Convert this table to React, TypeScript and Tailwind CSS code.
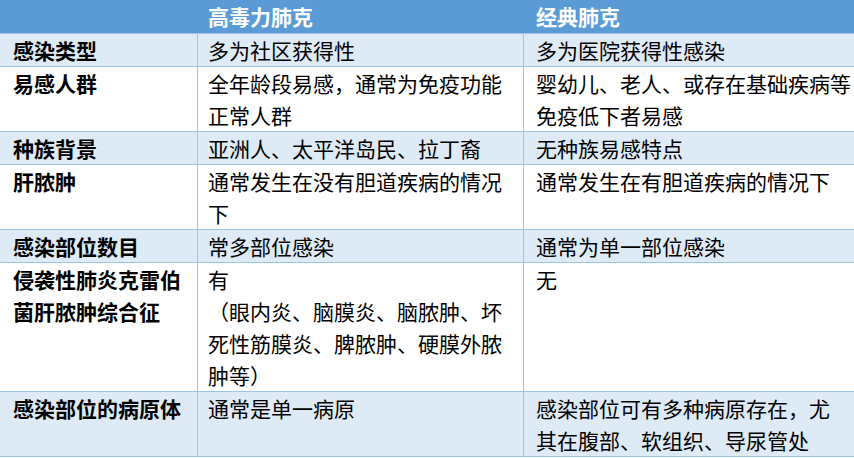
interface Row {
  label: string[];
  a: string[];
  b: string[];
  shade: boolean;
}

const rows: Row[] = [
  { label: ["感染类型"], a: ["多为社区获得性"], b: ["多为医院获得性感染"], shade: true },
  {
    label: ["易感人群"],
    a: ["全年龄段易感，通常为免疫功能", "正常人群"],
    b: ["婴幼儿、老人、或存在基础疾病等", "免疫低下者易感"],
    shade: false,
  },
  { label: ["种族背景"], a: ["亚洲人、太平洋岛民、拉丁裔"], b: ["无种族易感特点"], shade: true },
  { label: ["肝脓肿"], a: ["通常发生在没有胆道疾病的情况", "下"], b: ["通常发生在有胆道疾病的情况下"], shade: false },
  { label: ["感染部位数目"], a: ["常多部位感染"], b: ["通常为单一部位感染"], shade: true },
  {
    label: ["侵袭性肺炎克雷伯", "菌肝脓肿综合征"],
    a: ["有", "（眼内炎、脑膜炎、脑脓肿、坏", "死性筋膜炎、脾脓肿、硬膜外脓", "肿等）"],
    b: ["无"],
    shade: false,
  },
  {
    label: ["感染部位的病原体"],
    a: ["通常是单一病原"],
    b: ["感染部位可有多种病原存在，尤", "其在腹部、软组织、导尿管处"],
    shade: true,
  },
];

function Lines({ lines }: { lines: string[] }) {
  return (
    <>
      {lines.map((l, i) => (
        <div key={i} className="whitespace-nowrap">
          {l}
        </div>
      ))}
    </>
  );
}

export default function App() {
  return (
    <div
      className="w-[854px] h-[458px] bg-white text-[21px] leading-[32px] text-black overflow-hidden"
      style={{ fontFamily: '"Noto Sans CJK SC", "Noto Sans", sans-serif' }}
    >
      <div className="flex h-[33px] bg-[#5b9bd5] font-bold text-white">
        <div className="w-[197px] shrink-0" />
        <div className="w-[326px] shrink-0 pl-[11px]">高毒力肺克</div>
        <div className="flex-1 pl-[13px]">经典肺克</div>
      </div>
      {rows.map((r, i) => (
        <div
          key={i}
          className={`flex border-t border-[#9dc3e6] ${r.shade ? "bg-[#deeaf6]" : "bg-white"} ${
            i === rows.length - 1 ? "border-b" : ""
          }`}
        >
          <div className="w-[197px] shrink-0 pl-[13px] font-bold">
            <Lines lines={r.label} />
          </div>
          <div className="w-[326px] shrink-0 border-l border-[#9dc3e6] pl-[10px]">
            <Lines lines={r.a} />
          </div>
          <div className="flex-1 border-l border-[#9dc3e6] pl-[12px]">
            <Lines lines={r.b} />
          </div>
        </div>
      ))}
    </div>
  );
}
